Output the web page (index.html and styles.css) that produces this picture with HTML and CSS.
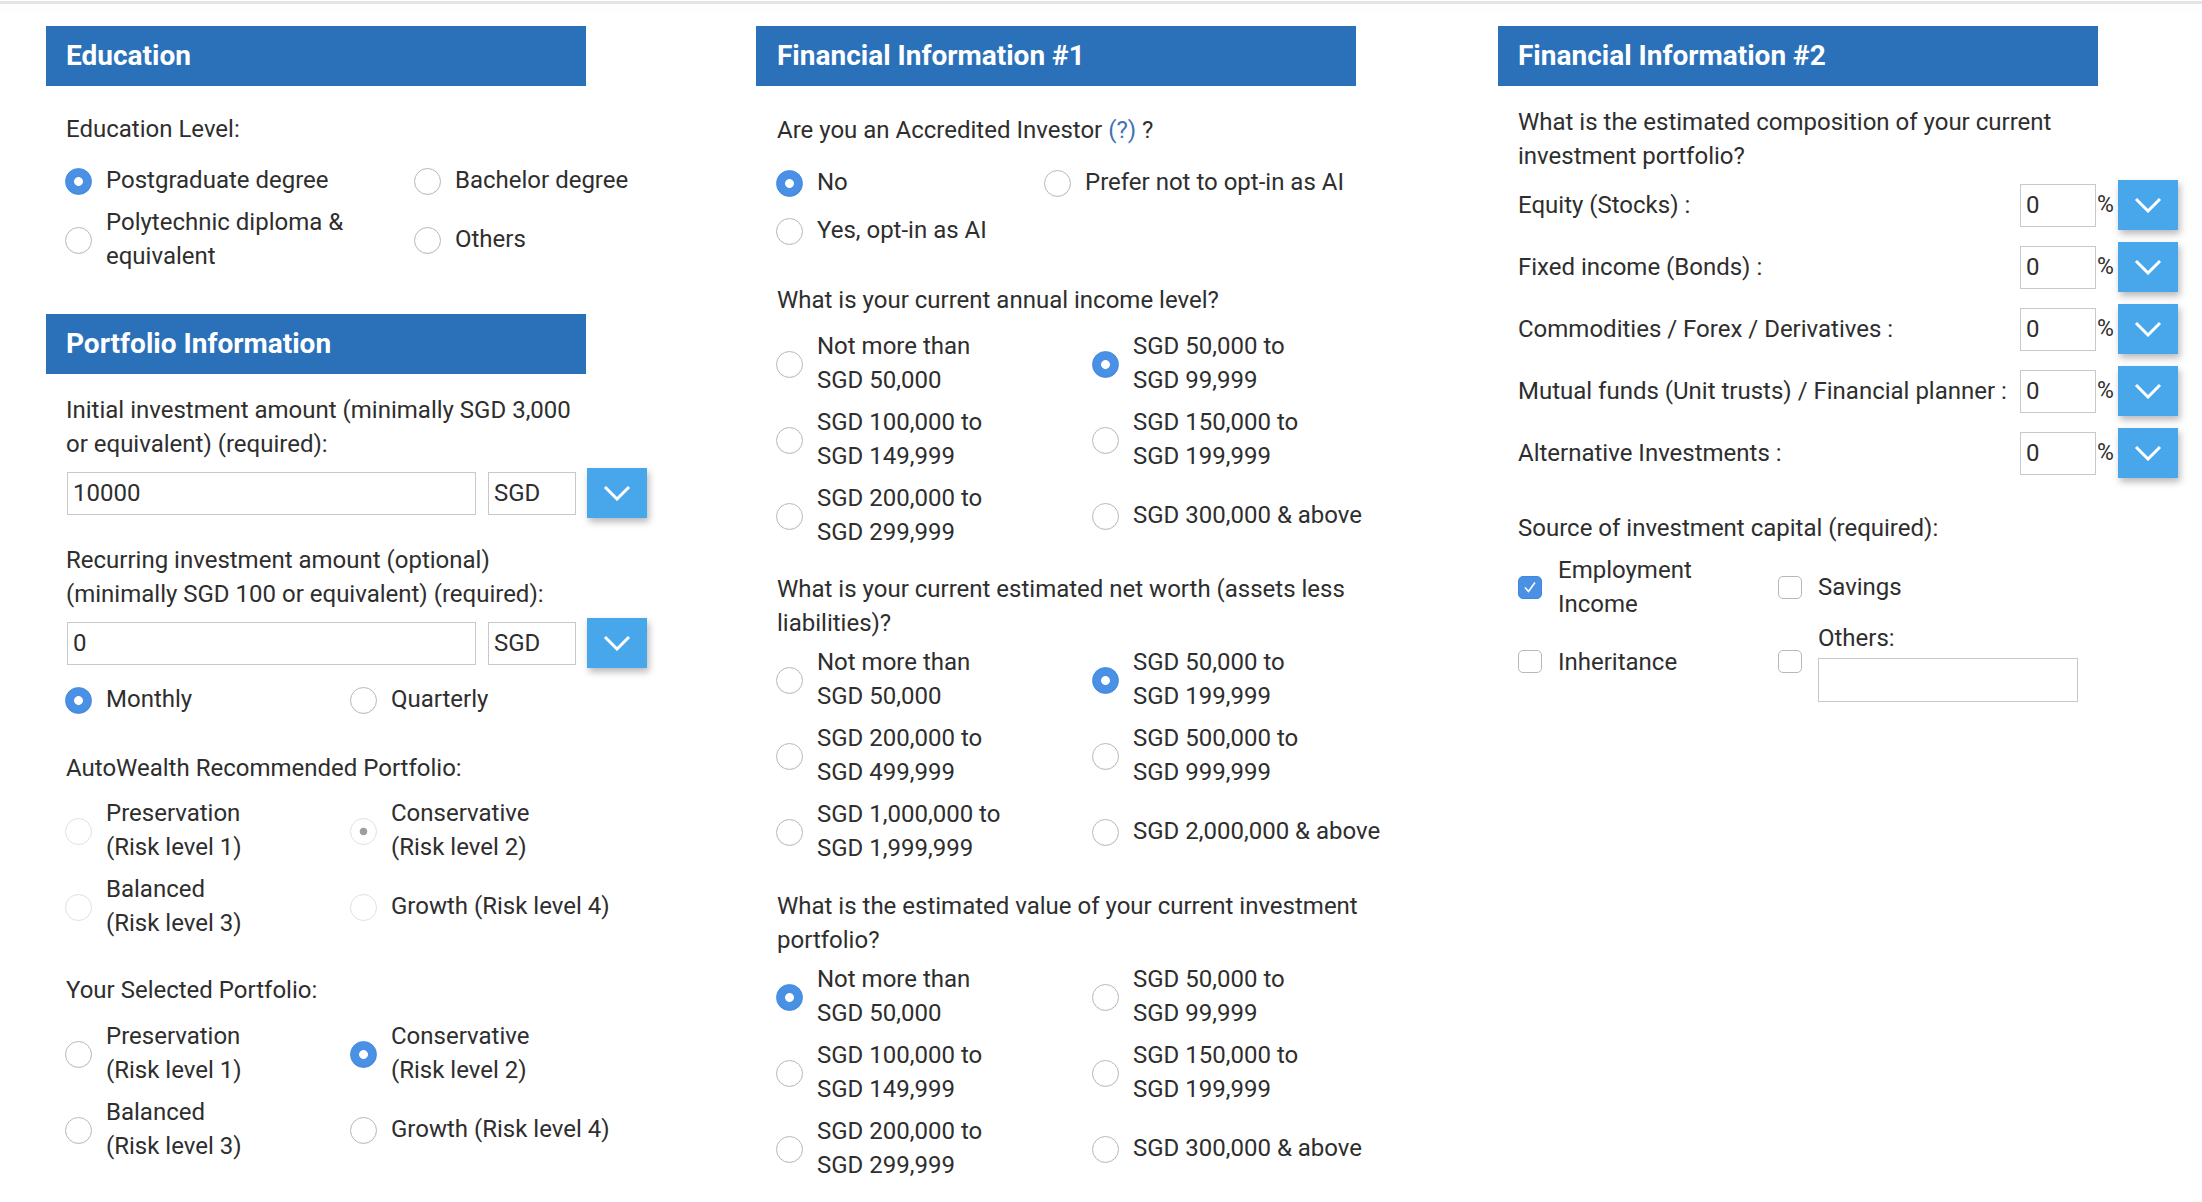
FILE: index.html
```html
<!DOCTYPE html>
<html lang="en">
<head>
<meta charset="utf-8">
<title>Account Opening</title>
<link rel="stylesheet" href="styles.css">
</head>
<body>
<div class="topbar"></div>
<main class="page">

  <section class="col col-a">
    <h2 class="bar bar-a">Education</h2>
    <div class="q q-edu">Education Level:</div>
    <div class="opts opts-edu">
      <label class="opt"><input type="radio" class="radio" name="edu" checked><span>Postgraduate degree</span></label>
      <label class="opt"><input type="radio" class="radio" name="edu"><span>Bachelor degree</span></label>
      <label class="opt"><input type="radio" class="radio" name="edu"><span>Polytechnic diploma &amp; equivalent</span></label>
      <label class="opt"><input type="radio" class="radio" name="edu"><span>Others</span></label>
    </div>

    <h2 class="bar bar-a bar-portfolio">Portfolio Information</h2>
    <div class="q q-wide q-initial">Initial investment amount (minimally SGD 3,000 or equivalent) (required):</div>
    <div class="amount">
      <input class="field field-amount" type="text" value="10000">
      <input class="field field-cur" type="text" value="SGD">
      <button class="drop" type="button"><svg width="28" height="16" viewBox="0 0 28 16"><polyline points="2,2 14,14 26,2" fill="none" stroke="#fff" stroke-width="3"/></svg></button>
    </div>
    <div class="q q-wide q-recurring">Recurring investment amount (optional) (minimally SGD 100 or equivalent) (required):</div>
    <div class="amount">
      <input class="field field-amount" type="text" value="0">
      <input class="field field-cur" type="text" value="SGD">
      <button class="drop" type="button"><svg width="28" height="16" viewBox="0 0 28 16"><polyline points="2,2 14,14 26,2" fill="none" stroke="#fff" stroke-width="3"/></svg></button>
    </div>
    <div class="opts opts-risk opts-freq">
      <label class="opt"><input type="radio" class="radio" name="freq" checked><span>Monthly</span></label>
      <label class="opt"><input type="radio" class="radio" name="freq"><span>Quarterly</span></label>
    </div>

    <div class="q q-auto">AutoWealth Recommended Portfolio:</div>
    <div class="opts opts-risk opts-auto">
      <label class="opt"><input type="radio" class="radio" name="auto" disabled><span>Preservation<br>(Risk level 1)</span></label>
      <label class="opt"><input type="radio" class="radio" name="auto" disabled checked><span>Conservative<br>(Risk level 2)</span></label>
      <label class="opt"><input type="radio" class="radio" name="auto" disabled><span>Balanced<br>(Risk level 3)</span></label>
      <label class="opt"><input type="radio" class="radio" name="auto" disabled><span>Growth (Risk level 4)</span></label>
    </div>

    <div class="q q-selected">Your Selected Portfolio:</div>
    <div class="opts opts-risk opts-sel">
      <label class="opt"><input type="radio" class="radio" name="sel"><span>Preservation<br>(Risk level 1)</span></label>
      <label class="opt"><input type="radio" class="radio" name="sel" checked><span>Conservative<br>(Risk level 2)</span></label>
      <label class="opt"><input type="radio" class="radio" name="sel"><span>Balanced<br>(Risk level 3)</span></label>
      <label class="opt"><input type="radio" class="radio" name="sel"><span>Growth (Risk level 4)</span></label>
    </div>
  </section>

  <section class="col col-b">
    <h2 class="bar bar-b">Financial Information #1</h2>
    <div class="q q-ai">Are you an Accredited Investor <a class="help" href="#">(?)</a> ?</div>
    <div class="opts opts-ai">
      <label class="opt"><input type="radio" class="radio" name="ai" checked><span>No</span></label>
      <label class="opt"><input type="radio" class="radio" name="ai"><span>Prefer not to opt-in as AI</span></label>
      <label class="opt"><input type="radio" class="radio" name="ai"><span>Yes, opt-in as AI</span></label>
    </div>

    <div class="q q-income">What is your current annual income level?</div>
    <div class="opts opts-money opts-income">
      <label class="opt"><input type="radio" class="radio" name="inc"><span>Not more than<br>SGD 50,000</span></label>
      <label class="opt"><input type="radio" class="radio" name="inc" checked><span>SGD 50,000 to<br>SGD 99,999</span></label>
      <label class="opt"><input type="radio" class="radio" name="inc"><span>SGD 100,000 to<br>SGD 149,999</span></label>
      <label class="opt"><input type="radio" class="radio" name="inc"><span>SGD 150,000 to<br>SGD 199,999</span></label>
      <label class="opt"><input type="radio" class="radio" name="inc"><span>SGD 200,000 to<br>SGD 299,999</span></label>
      <label class="opt"><input type="radio" class="radio" name="inc"><span>SGD 300,000 &amp; above</span></label>
    </div>

    <div class="q q-worth">What is your current estimated net worth (assets less liabilities)?</div>
    <div class="opts opts-money opts-after">
      <label class="opt"><input type="radio" class="radio" name="nw"><span>Not more than<br>SGD 50,000</span></label>
      <label class="opt"><input type="radio" class="radio" name="nw" checked><span>SGD 50,000 to<br>SGD 199,999</span></label>
      <label class="opt"><input type="radio" class="radio" name="nw"><span>SGD 200,000 to<br>SGD 499,999</span></label>
      <label class="opt"><input type="radio" class="radio" name="nw"><span>SGD 500,000 to<br>SGD 999,999</span></label>
      <label class="opt"><input type="radio" class="radio" name="nw"><span>SGD 1,000,000 to<br>SGD 1,999,999</span></label>
      <label class="opt"><input type="radio" class="radio" name="nw"><span>SGD 2,000,000 &amp; above</span></label>
    </div>

    <div class="q q-value">What is the estimated value of your current investment portfolio?</div>
    <div class="opts opts-money opts-after">
      <label class="opt"><input type="radio" class="radio" name="val" checked><span>Not more than<br>SGD 50,000</span></label>
      <label class="opt"><input type="radio" class="radio" name="val"><span>SGD 50,000 to<br>SGD 99,999</span></label>
      <label class="opt"><input type="radio" class="radio" name="val"><span>SGD 100,000 to<br>SGD 149,999</span></label>
      <label class="opt"><input type="radio" class="radio" name="val"><span>SGD 150,000 to<br>SGD 199,999</span></label>
      <label class="opt"><input type="radio" class="radio" name="val"><span>SGD 200,000 to<br>SGD 299,999</span></label>
      <label class="opt"><input type="radio" class="radio" name="val"><span>SGD 300,000 &amp; above</span></label>
    </div>
  </section>

  <section class="col col-c">
    <h2 class="bar bar-c">Financial Information #2</h2>
    <div class="q q-comp">What is the estimated composition of your current investment portfolio?</div>
    <div class="alloc">
      <div class="alloc-row"><span class="alloc-label">Equity (Stocks) :</span><input class="field field-pct" type="text" value="0"><span class="pct">%</span><button class="drop" type="button"><svg width="28" height="16" viewBox="0 0 28 16"><polyline points="2,2 14,14 26,2" fill="none" stroke="#fff" stroke-width="3"/></svg></button></div>
      <div class="alloc-row"><span class="alloc-label">Fixed income (Bonds) :</span><input class="field field-pct" type="text" value="0"><span class="pct">%</span><button class="drop" type="button"><svg width="28" height="16" viewBox="0 0 28 16"><polyline points="2,2 14,14 26,2" fill="none" stroke="#fff" stroke-width="3"/></svg></button></div>
      <div class="alloc-row"><span class="alloc-label">Commodities / Forex / Derivatives :</span><input class="field field-pct" type="text" value="0"><span class="pct">%</span><button class="drop" type="button"><svg width="28" height="16" viewBox="0 0 28 16"><polyline points="2,2 14,14 26,2" fill="none" stroke="#fff" stroke-width="3"/></svg></button></div>
      <div class="alloc-row"><span class="alloc-label">Mutual funds (Unit trusts) / Financial planner :</span><input class="field field-pct" type="text" value="0"><span class="pct">%</span><button class="drop" type="button"><svg width="28" height="16" viewBox="0 0 28 16"><polyline points="2,2 14,14 26,2" fill="none" stroke="#fff" stroke-width="3"/></svg></button></div>
      <div class="alloc-row"><span class="alloc-label">Alternative Investments :</span><input class="field field-pct" type="text" value="0"><span class="pct">%</span><button class="drop" type="button"><svg width="28" height="16" viewBox="0 0 28 16"><polyline points="2,2 14,14 26,2" fill="none" stroke="#fff" stroke-width="3"/></svg></button></div>
    </div>

    <div class="q q-source">Source of investment capital (required):</div>
    <div class="checks">
      <label class="chk"><span class="box on"><svg width="16" height="16" viewBox="0 0 16 16"><polyline points="3,8.5 6.5,12.5 13,3.5" fill="none" stroke="#fff" stroke-width="1.6"/></svg></span><span class="chk-text">Employment Income</span></label>
      <label class="chk"><span class="box"></span><span class="chk-text">Savings</span></label>
      <label class="chk"><span class="box"></span><span class="chk-text">Inheritance</span></label>
      <label class="chk"><span class="box"></span><span class="chk-other"><span class="other-label">Others:</span><input class="field field-other" type="text"></span></label>
    </div>
  </section>

</main>
</body>
</html>
```

FILE: styles.css
```css
* { box-sizing: border-box; }

html, body {
  margin: 0;
  padding: 0;
  background: #ffffff;
}

body {
  font-family: Roboto, "Liberation Sans", Arial, sans-serif;
  font-size: 24px;
  line-height: 34px;
  color: #2e2e2e;
  overflow: hidden;
}

.topbar {
  height: 4px;
  background: linear-gradient(#ffffff 0 1px, #e4e4e4 1px 4px);
  box-shadow: 0 4px 14px rgba(0, 0, 0, 0.045);
}

.page {
  display: flex;
  align-items: flex-start;
  padding: 22px 0 0 46px;
}

.col { flex: none; }
.col-a { width: 710px; }
.col-b { width: 742px; }
.col-c { width: 700px; }

.bar {
  margin: 0;
  height: 60px;
  display: flex;
  align-items: center;
  padding-left: 20px;
  background: #2b71ba;
  color: #ffffff;
  font-size: 28px;
  font-weight: 700;
  letter-spacing: 0;
}
.bar-a { width: 540px; }
.bar-b { width: 600px; padding-left: 21px; }
.bar-c { width: 600px; }

.col-a > :not(.bar) { margin-left: 20px; }
.col-b > :not(.bar) { margin-left: 21px; }
.col-c > :not(.bar) { margin-left: 20px; }

.q-wide { width: 520px; }
.help { color: #3f74b0; text-decoration: none; }

/* radio groups */
.opts {
  display: grid;
  row-gap: 8px;
}
.opts-edu { grid-template-columns: 349px 349px; }
.opts-risk { grid-template-columns: 285px 285px; }
.opts-ai { grid-template-columns: 268px 330px; row-gap: 14px; }
.opts-money { grid-template-columns: 316px 316px; }

.opt {
  display: flex;
  align-items: center;
  gap: 14px;
}
.opt > span { min-width: 0; }

.radio {
  -webkit-appearance: none;
  appearance: none;
  flex: none;
  width: 27px;
  height: 27px;
  margin: 3px 0 0 -1px;
  border-radius: 50%;
  border: 1px solid #b8b8b8;
  background: #ffffff;
  box-shadow: inset 0 -1px 1px rgba(0, 0, 0, 0.04);
}
.radio:checked {
  border-color: #3f8ae0;
  background: radial-gradient(circle, #ffffff 0 4px, #4a91e6 4.8px);
}
.radio:disabled {
  border-color: #e0e0e0;
  box-shadow: none;
}
.radio:disabled:checked {
  background: radial-gradient(circle, #9d9d9d 0 3.4px, #ffffff 4.2px);
}

/* vertical rhythm column A */
.q-edu { margin-top: 26px; }
.opts-edu { margin-top: 17px; }
.bar-portfolio { margin-top: 41px; }
.q-initial { margin-top: 19px; }
.amount {
  display: flex;
  align-items: center;
  margin-top: 7px;
}
.q-recurring { margin-top: 25px; }
.opts-freq { margin-top: 14px; }
.q-auto { margin-top: 35px; }
.opts-auto { margin-top: 11px; }
.q-selected { margin-top: 33px; }
.opts-sel { margin-top: 12px; }

/* fields */
.field {
  height: 43px;
  border: 1px solid #c8c8c8;
  border-radius: 0;
  padding: 0 5px;
  font-family: Roboto, "Liberation Sans", Arial, sans-serif;
  font-size: 24px;
  color: #2e2e2e;
  background: #ffffff;
  outline: none;
}
.field-amount { width: 409px; margin-left: 1px; }
.field-cur { width: 88px; margin-left: 12px; }
.amount .drop { margin-left: 11px; }

.drop {
  flex: none;
  width: 60px;
  height: 50px;
  border: 0;
  padding: 0;
  background: #47a7ea;
  box-shadow: 2px 4px 7px rgba(0, 0, 0, 0.28);
  display: flex;
  align-items: center;
  justify-content: center;
}
.drop svg { display: block; }

/* column B rhythm */
.q-ai { margin-top: 27px; }
.opts-ai { margin-top: 18px; }
.q-income { margin-top: 36px; }
.opts-income { margin-top: 12px; }
.q-worth { margin-top: 23px; width: 600px; }
.q-value { margin-top: 24px; width: 600px; }
.opts-after { margin-top: 5px; }

/* column C */
.q-comp { margin-top: 19px; width: 600px; }
.alloc {
  margin-top: 7px;
  width: 660px;
  display: flex;
  flex-direction: column;
  gap: 12px;
}
.alloc-row {
  display: flex;
  align-items: center;
}
.alloc-label { flex: 1; }
.field-pct { width: 76px; }
.pct {
  width: 22px;
  padding-left: 1px;
  font-size: 23px;
  letter-spacing: -2px;
  white-space: nowrap;
}

.q-source { margin-top: 33px; }
.checks {
  margin-top: 8px;
  display: grid;
  grid-template-columns: 260px 320px;
}
.chk {
  display: flex;
  align-items: center;
  gap: 16px;
}
.chk-text { max-width: 190px; }
.box {
  flex: none;
  width: 24px;
  height: 23px;
  border: 1px solid #b8b8b8;
  border-radius: 5px;
  background: #ffffff;
  display: flex;
  align-items: center;
  justify-content: center;
}
.box.on {
  background: #4a91e6;
  border-color: #3f86dc;
}
.chk-other {
  display: flex;
  flex-direction: column;
}
.field-other {
  width: 260px;
  height: 44px;
  margin-top: 3px;
}
```
